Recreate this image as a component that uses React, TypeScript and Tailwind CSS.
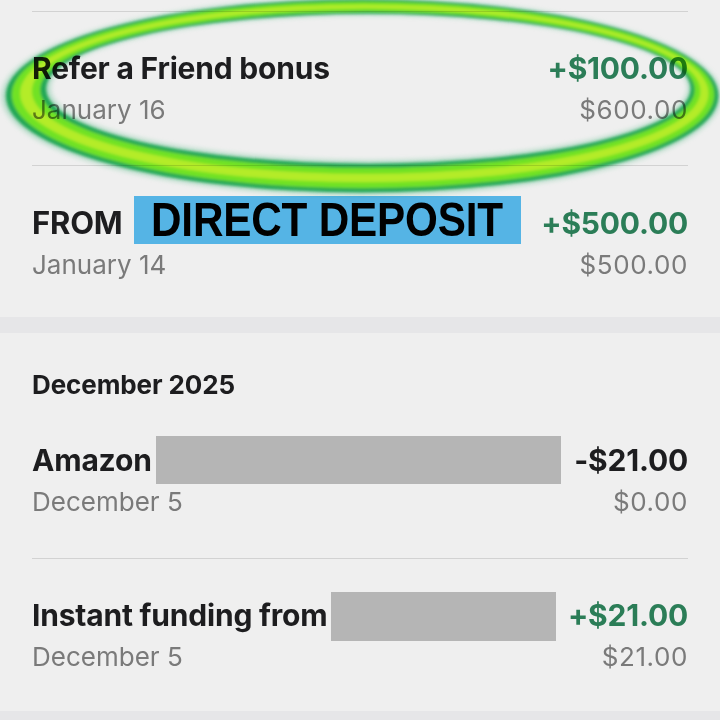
import React from 'react';

const font = { fontFamily: 'Inter, "Liberation Sans", sans-serif' };

type Tx = {
  title: React.ReactNode;
  date: string;
  amount: string;
  balance: string;
  tone: 'plus' | 'minus';
};

const Row: React.FC<Tx & { className?: string }> = ({ title, date, amount, balance, tone, className }) => (
  <div className={className}>
    <div className="flex h-[36px] items-center justify-between">
      <div className="flex h-[36px] items-center text-[30px] font-bold leading-[36px] tracking-[-0.2px] text-[#1d1d1f]">
        {title}
      </div>
      <div
        className={
          'text-[30px] font-bold leading-[36px] tracking-[-0.2px] ' +
          (tone === 'plus' ? 'text-[#2b7d57]' : 'text-[#1d1d1f]')
        }
      >
        {amount}
      </div>
    </div>
    <div className="mt-2 flex h-[32px] items-center justify-between text-[26px] leading-[32px] text-[#7a7a7a]">
      <span>{date}</span>
      <span className="tracking-[0.6px]">{balance}</span>
    </div>
  </div>
);

// marker ring drawn between an outer and an inner ellipse
type Ell = { cx: number; cy: number; rx: number; ry: number };
const OUTER: Ell = { cx: 362, cy: 96, rx: 357, ry: 97 };
const INNER: Ell = { cx: 368.5, cy: 88.5, rx: 321.5, ry: 74.5 };

const lerp = (t: number): Ell => ({
  cx: OUTER.cx + (INNER.cx - OUTER.cx) * t,
  cy: OUTER.cy + (INNER.cy - OUTER.cy) * t,
  rx: OUTER.rx + (INNER.rx - OUTER.rx) * t,
  ry: OUTER.ry + (INNER.ry - OUTER.ry) * t,
});

const ell = ({ cx, cy, rx, ry }: Ell) =>
  `M${cx - rx} ${cy} a${rx} ${ry} 0 1 0 ${2 * rx} 0 a${rx} ${ry} 0 1 0 ${-2 * rx} 0Z`;

const ring = (a: number, b: number) => ell(lerp(a)) + ' ' + ell(lerp(b));

const Highlighter: React.FC = () => (
  <svg
    className="pointer-events-none absolute left-0 top-0 mix-blend-multiply"
    width="720"
    height="220"
    viewBox="0 0 720 220"
  >
    <defs>
      <filter id="soft" x="-5%" y="-20%" width="110%" height="140%">
        <feGaussianBlur stdDeviation="1.4" />
      </filter>
      <filter id="halo" x="-5%" y="-20%" width="110%" height="140%">
        <feGaussianBlur stdDeviation="2.5" />
      </filter>
    </defs>
    <path d={ring(-0.08, 1.08)} fill="#8ad9b0" fillRule="evenodd" opacity="0.55" filter="url(#halo)" />
    <g filter="url(#soft)">
      <path d={ring(0.02, 0.98)} fill="#22b25a" fillRule="evenodd" />
      <path d={ring(0.16, 0.84)} fill="#78f226" fillRule="evenodd" />
      <path d={ring(0.36, 0.64)} fill="#d8ff2e" fillRule="evenodd" opacity="0.75" />
    </g>
  </svg>
);

export default function App() {
  return (
    <div className="relative h-[720px] w-[720px] overflow-hidden bg-[#e6e6e8]" style={font}>
      <div className="bg-[#efefef] px-[32px] pt-[11px]">
        <div className="border-t border-[#d2d2d2]" />
        <Row
          className="pb-[39px] pt-[38px]"
          title="Refer a Friend bonus"
          date="January 16"
          amount="+$100.00"
          balance="$600.00"
          tone="plus"
        />
        <div className="border-t border-[#d2d2d2]" />
        <Row
          className="pb-[36px] pt-[39px]"
          title={
            <>
              <span className="text-[31px]">FROM</span>
              <span className="relative -top-[3px] ml-[11px] flex h-[48px] w-[387px] shrink-0 items-center justify-center bg-[#55b4e5]">
                <span
                  className="inline-block scale-x-[0.88] whitespace-nowrap text-[48px] font-bold leading-none text-black"
                  style={{ fontFamily: '"Liberation Sans", Arial, sans-serif' }}
                >
                  DIRECT DEPOSIT
                </span>
              </span>
            </>
          }
          date="January 14"
          amount="+$500.00"
          balance="$500.00"
          tone="plus"
        />
      </div>

      <div className="mt-[16px] bg-[#efefef] px-[32px] pt-[36px]">
        <div className="text-[26px] font-bold leading-[32px] tracking-[-0.1px] text-[#1d1d1f]">December 2025</div>
        <Row
          className="pb-[40px] pt-[41px]"
          title={
            <>
              <span>Amazon</span>
              <span className="ml-[4px] block h-[48px] w-[405px] shrink-0 bg-[#b5b5b5]" />
            </>
          }
          date="December 5"
          amount="-$21.00"
          balance="$0.00"
          tone="minus"
        />
        <div className="border-t border-[#d2d2d2]" />
        <Row
          className="pb-[38px] pt-[38px]"
          title={
            <>
              <span>Instant funding from</span>
              <span className="relative top-[1px] ml-[3px] block h-[49px] w-[225px] shrink-0 bg-[#b5b5b5]" />
            </>
          }
          date="December 5"
          amount="+$21.00"
          balance="$21.00"
          tone="plus"
        />
      </div>

      <Highlighter />
    </div>
  );
}
